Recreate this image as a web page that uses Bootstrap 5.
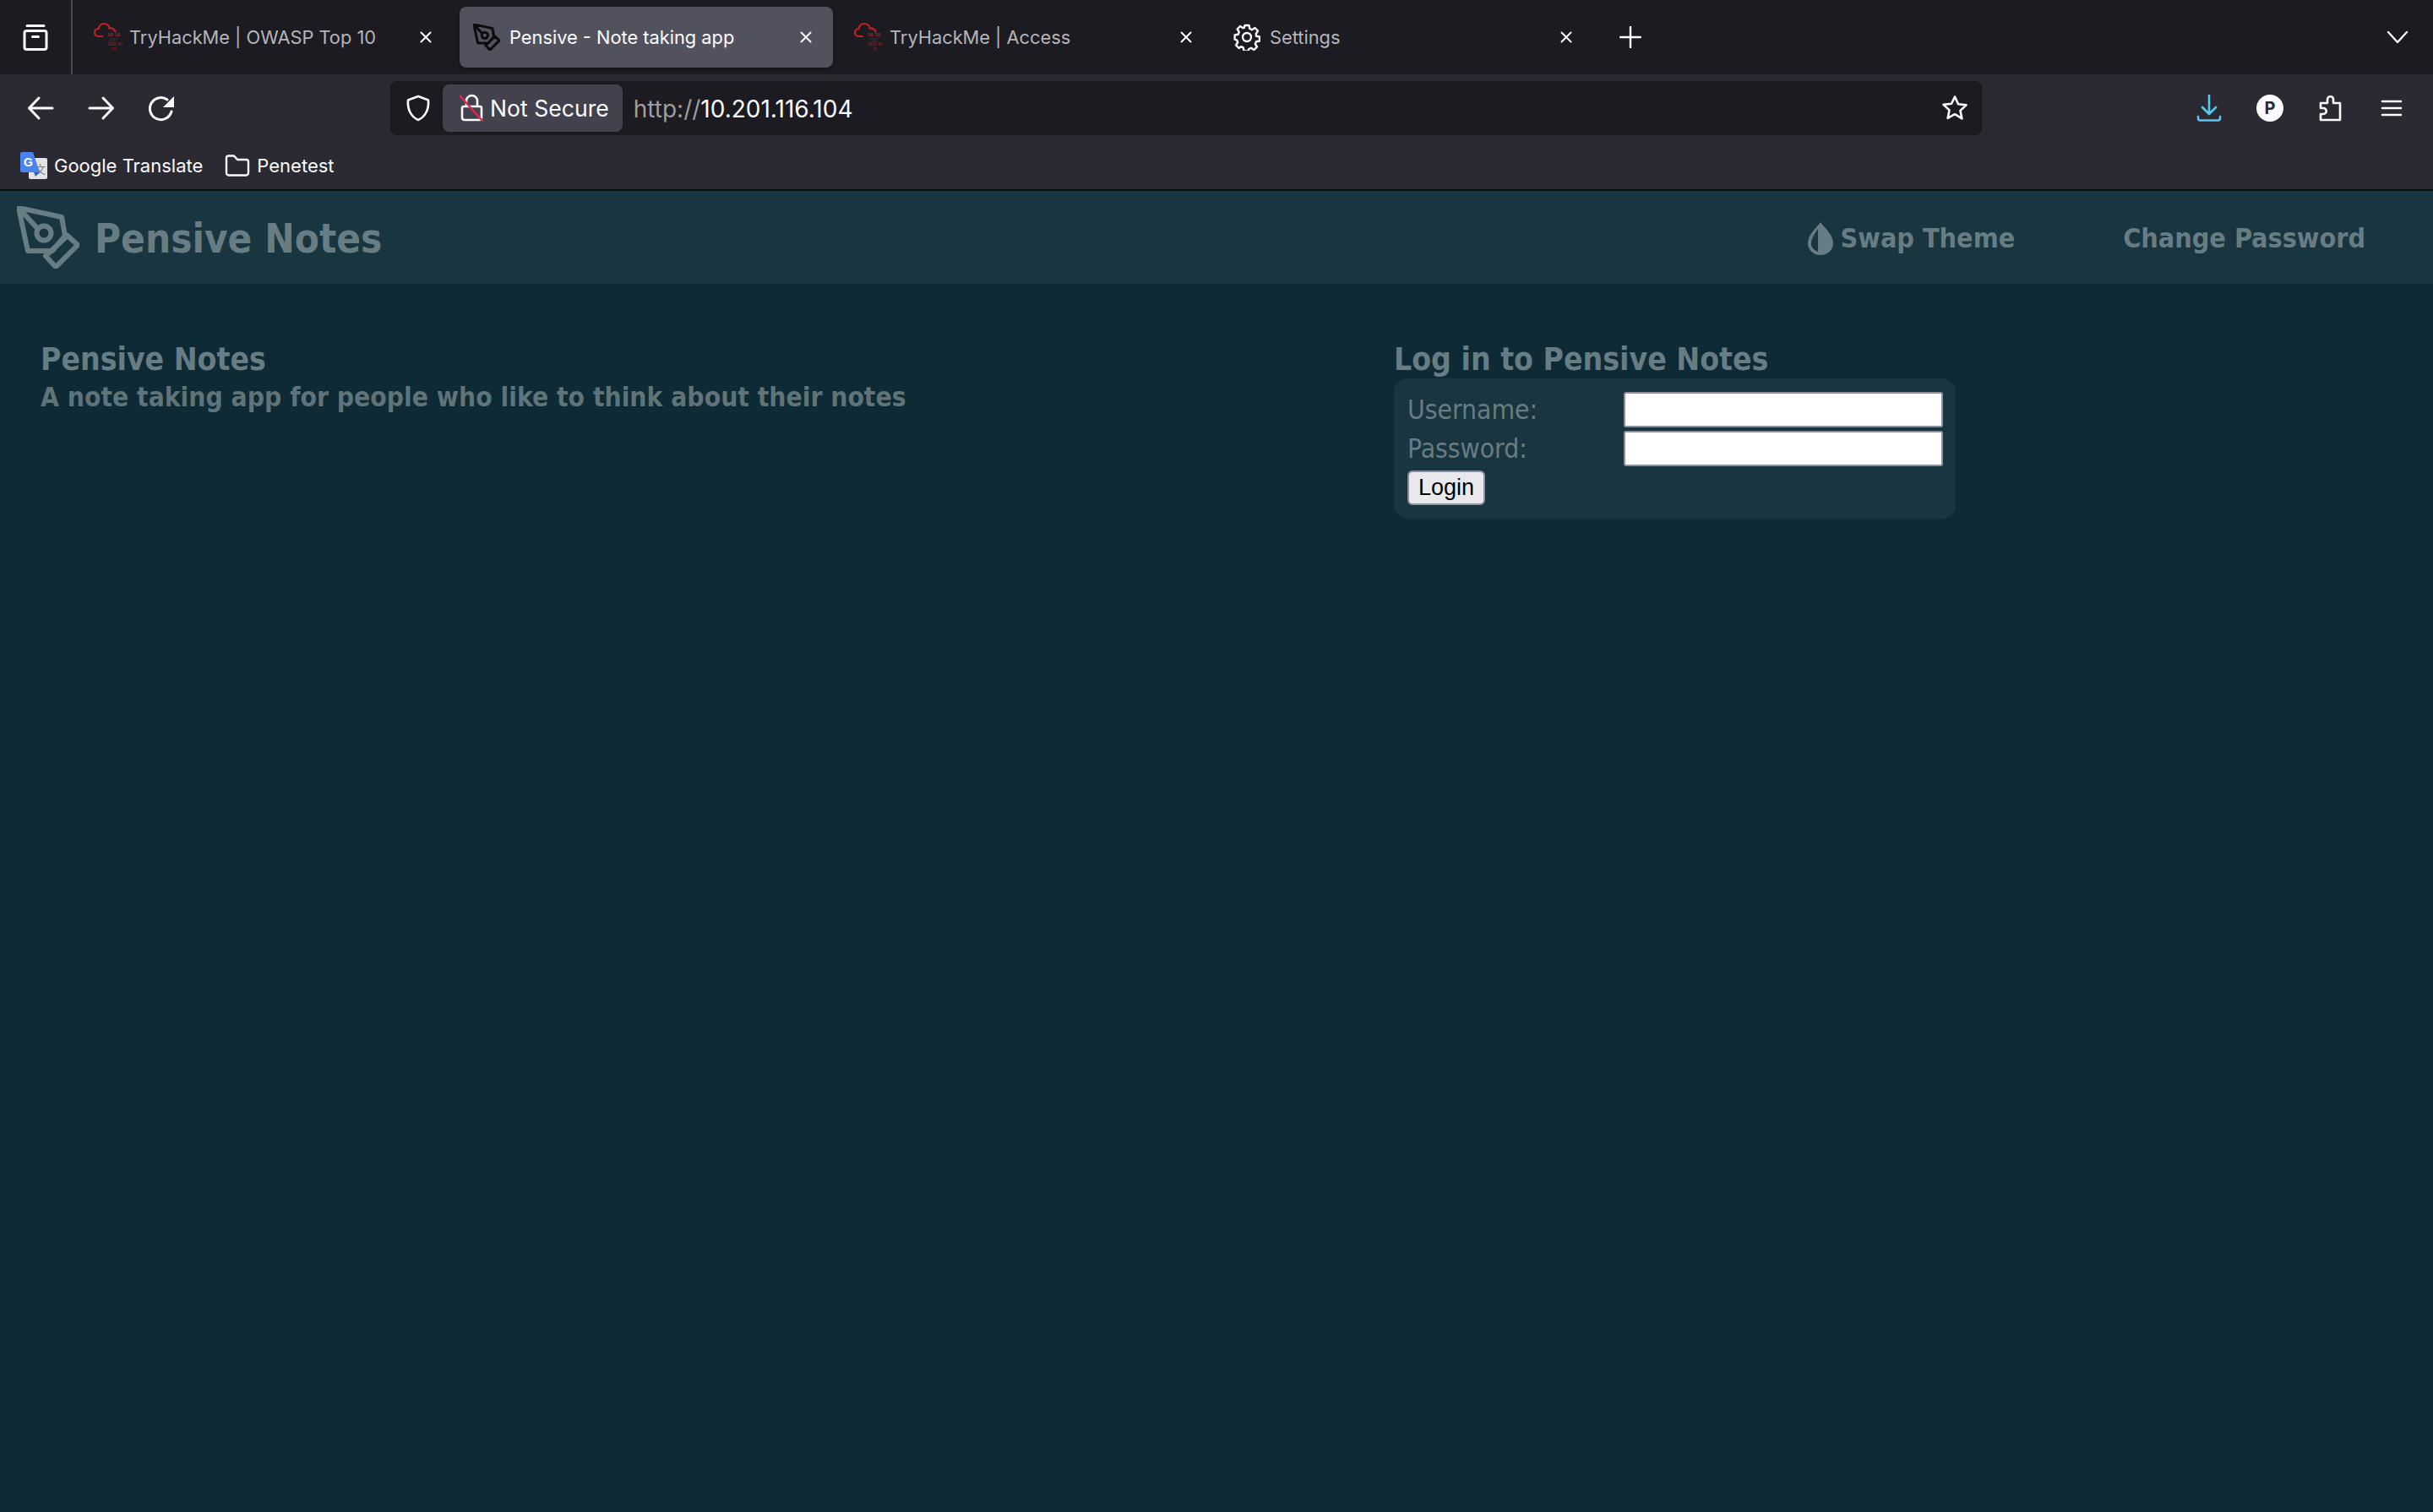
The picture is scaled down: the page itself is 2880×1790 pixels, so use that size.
<!DOCTYPE html>
<html lang="en">
  <head>
    <meta charset="UTF-8" />
    <meta name="viewport" content="width=device-width, initial-scale=1.0" />
    <title>Pensive - Note taking app</title>
    <link href="https://cdn.jsdelivr.net/npm/bootstrap@5.3.0/dist/css/bootstrap.min.css" rel="stylesheet" />
    <style>
      html, body { height: 100%; overflow: hidden; }
      body { background-color: #0e2a35; font-family: "Inter", "Liberation Sans", sans-serif; }
      svg { display: block; flex: none; }
      .ico { fill: none; stroke: #fbfbfe; stroke-width: 3; stroke-linecap: round; stroke-linejoin: round; }

      /* browser frame */
      .tab-strip { height: 88px; background: #1c1b22; }
      .strip-left { width: 86px; height: 88px; border-right: 2px solid #4a4a50; }
      .tabs { padding-left: 8px; gap: 8px; }
      .tab-item { width: 442px; height: 72px; padding: 0 16px; border-radius: 8px; font-size: 22px; color: #b5b5b9; }
      .tab-item.active { background: #52525e; color: #fbfbfe; box-shadow: 0 1px 3px rgba(0,0,0,.4); }
      .tab-title { margin-left: 7px; margin-top: 1px; white-space: nowrap; font-size: 21.8px; }
      .tab-close { margin-left: auto; margin-right: 8px; }
      .strip-end { margin-left: auto; padding-right: 28px; }
      .plus-wrap { margin-left: 31px; }

      .tool-row { height: 80px; background: #2b2a33; padding-top: 8px; }
      .nav-btns { width: 462px; padding-left: 32px; gap: 40px; }
      .url-bar { width: 1884px; height: 64px; background: #1c1b22; border-radius: 8px; padding: 4px 16px 4px 18px; }
      .not-secure { height: 56px; padding: 0 16px 0 20px; margin-left: 14px; background: #42414d; border-radius: 8px; color: #fbfbfe; gap: 8px; font-size: 26.6px; }
      .not-secure span { margin-top: 1px; }
      .url-text { margin-left: 13px; margin-top: 1px; color: #fbfbfe; font-size: 28px; }
      .url-text span { color: #9e9ea0; }
      .star { margin-left: auto; }
      .tool-end { margin-left: 253px; gap: 40px; }
      .avatar { width: 32px; height: 32px; border-radius: 50%; background: #fbfbfe; color: #2b2a33; font-size: 20px; font-weight: 700; }

      .mark-row { height: 58px; background: #2b2a33; padding-left: 24px; font-size: 22px; color: #fbfbfe; gap: 26px; border-bottom: 2px solid #0c0c0d; }
      .mark-item { gap: 8px; }
      .mark-item span { margin-top: 1px; }

      /* the page itself */
      .site-nav { height: 110px; background: #183540; padding: 0 80px 0 20px; font-family: "DejaVu Sans Condensed", "DejaVu Sans", sans-serif; font-weight: 700; color: #687c83; }
      .site-logo { font-size: 47.2px; margin-left: 18px; margin-top: 4px; }
      .site-links { margin-left: auto; gap: 128px; font-size: 32px; margin-top: 2px; }
      .site-links span.drop { gap: 8px; }
      .content { padding: 68px 0 0 48px; font-family: "DejaVu Sans Condensed", "DejaVu Sans", sans-serif; color: #687c83; }
      .intro { width: 1602px; }
      .intro h1, .login-side h1 { font-size: 37px; font-weight: 700; line-height: 44px; margin: 0; }
      .intro h2 { font-size: 31.5px; font-weight: 700; line-height: 44px; margin: 0 0 0 0; color: #5f7379; }
      .login-panel { width: 665px; height: 166px; background: #183540; border-radius: 16px; padding: 16px 16px 0; margin-top: 0; font-size: 31.5px; }
      .login-grid { display: grid; grid-template-columns: 256px 378px; row-gap: 4px; align-items: center; }
      .login-grid label { line-height: 42px; font-weight: 400; color: #687c83; }
      .login-grid input { height: 42px; width: 378px; border: 2px solid #8f8f9d; border-radius: 3px; background: #fff; padding: 0 4px; }
      .login-btn { width: 92px; height: 41px; margin-top: 5px; padding: 0; border: 2px solid #8f8f9d; border-radius: 6px; background: #e9e9ed; color: #000; font-family: "Liberation Sans", sans-serif; font-size: 27px; line-height: 1; }
    </style>
  </head>
  <body class="d-flex flex-column">
    <div class="tab-strip d-flex align-items-center">
      <div class="strip-left d-flex align-items-center justify-content-center">
        <svg class="ico" width="34" height="34" viewBox="0 0 34 34"><path d="M7 3.500h20M4 12c0-1.700 1-2.500 2.500-2.500h21c1.500 0 2.500.8 2.500 2.500v17c0 1.700-1 2.500-2.500 2.500h-21C5 31.500 4 30.700 4 29zM13.500 16.500h7" /></svg>
      </div>
      <div class="tabs d-flex align-items-center">
        <div class="tab-item d-flex align-items-center">
          <svg width="36" height="36" viewBox="0 0 36 36">
            <path d="M11 17H6.500C3.500 17 2 14.800 2 12.500 2 10 4 8 6.500 8 7.500 4 10 2 13 2c3.500 0 6 2.500 6.700 5.500C22 6.800 25.500 8 26.500 11.500" fill="none" stroke="#c0201e" stroke-width="2.200" stroke-linecap="round" />
            <text x="17" y="17" font-family="Liberation Sans" font-size="6" font-weight="700" fill="#b4201e">10 10</text>
            <text x="19" y="23" font-family="Liberation Sans" font-size="5" fill="#3c3c40">1110</text>
            <text x="17" y="28" font-family="Liberation Sans" font-size="5" font-weight="700" fill="#8e1c1c">0101 01</text>
            <text x="23" y="33" font-family="Liberation Sans" font-size="4" font-weight="700" fill="#8e1c1c">01</text>
          </svg>
          <span class="tab-title">TryHackMe | OWASP Top 10</span>
          <svg class="tab-close" width="16" height="16" viewBox="0 0 16 16"><path d="M2.500 2.500l11 11M13.500 2.500l-11 11" fill="none" stroke="#fbfbfe" stroke-width="2" stroke-linecap="round" /></svg>
        </div>
        <div class="tab-item active d-flex align-items-center">
          <svg width="32" height="32" viewBox="0 0 74 74" fill="none" stroke="#0c0c0d" stroke-width="7" stroke-linejoin="round" stroke-linecap="round"><path d="M2 2l51 11 4 22-15 18H13zM60 35l12 11-26 26-12-13zM2 2l21 23" /><circle cx="32" cy="32" r="8.500" /></svg>
          <span class="tab-title" style="margin-left:11px">Pensive - Note taking app</span>
          <svg class="tab-close" width="16" height="16" viewBox="0 0 16 16"><path d="M2.500 2.500l11 11M13.500 2.500l-11 11" fill="none" stroke="#fbfbfe" stroke-width="2" stroke-linecap="round" /></svg>
        </div>
        <div class="tab-item d-flex align-items-center">
          <svg width="36" height="36" viewBox="0 0 36 36">
            <path d="M11 17H6.500C3.500 17 2 14.800 2 12.500 2 10 4 8 6.500 8 7.500 4 10 2 13 2c3.500 0 6 2.500 6.700 5.500C22 6.800 25.500 8 26.500 11.500" fill="none" stroke="#c0201e" stroke-width="2.200" stroke-linecap="round" />
            <text x="17" y="17" font-family="Liberation Sans" font-size="6" font-weight="700" fill="#b4201e">10 10</text>
            <text x="19" y="23" font-family="Liberation Sans" font-size="5" fill="#3c3c40">1110</text>
            <text x="17" y="28" font-family="Liberation Sans" font-size="5" font-weight="700" fill="#8e1c1c">0101 01</text>
            <text x="23" y="33" font-family="Liberation Sans" font-size="4" font-weight="700" fill="#8e1c1c">01</text>
          </svg>
          <span class="tab-title">TryHackMe | Access</span>
          <svg class="tab-close" width="16" height="16" viewBox="0 0 16 16"><path d="M2.500 2.500l11 11M13.500 2.500l-11 11" fill="none" stroke="#fbfbfe" stroke-width="2" stroke-linecap="round" /></svg>
        </div>
        <div class="tab-item d-flex align-items-center">
          <svg width="32" height="32" viewBox="0 0 32 32" fill="none" stroke="#fbfbfe" stroke-width="2.400" stroke-linejoin="round"><circle cx="16" cy="16" r="5" /><path d="M13.500 2h5l.8 4 2.700 1.200 3.500-2.200 3.500 3.500-2.200 3.500L27 14.700l4 .8v5l-4 .8-1.200 2.700 2.200 3.500-3.500 3.500-3.500-2.200-2.700 1.200-.8 2.400h-5l-.8-4-2.700-1.200L6.500 29 3 25.500l2.200-3.500L4 19.300l-2.400-.8v-5l4-.8 1.200-2.700L4.600 6.500 8 3l3.500 2.200 1.200-.4z" /></svg>
          <span class="tab-title" style="margin-left:11px">Settings</span>
          <svg class="tab-close" width="16" height="16" viewBox="0 0 16 16"><path d="M2.500 2.500l11 11M13.500 2.500l-11 11" fill="none" stroke="#fbfbfe" stroke-width="2" stroke-linecap="round" /></svg>
        </div>
      </div>
      <svg class="plus-wrap" width="26" height="26" viewBox="0 0 26 26"><path d="M13 1v24M1 13h24" stroke="#fbfbfe" stroke-width="2.400" stroke-linecap="round" /></svg>
      <div class="strip-end">
        <svg class="ico" width="28" height="18" viewBox="0 0 28 18" style="stroke-width:2.400"><path d="M3 3l11 12L25 3" /></svg>
      </div>
    </div>

    <div class="tool-row d-flex align-items-start">
      <div class="nav-btns d-flex align-items-center" style="height:64px">
        <svg class="ico" width="32" height="32" viewBox="0 0 32 32"><path d="M30 16H3M14 4L2.500 16 14 28" /></svg>
        <svg class="ico" width="32" height="32" viewBox="0 0 32 32"><path d="M2 16h27M18 4l11.500 12L18 28" /></svg>
        <svg width="32" height="32" viewBox="0 0 32 32"><path d="M27 20A13 13 0 1 1 22 6" fill="none" stroke="#fbfbfe" stroke-width="3" stroke-linecap="round" /><path d="M30 2v13H17z" fill="#fbfbfe" /></svg>
      </div>
      <div class="url-bar d-flex align-items-center">
        <svg class="ico" width="30" height="32" viewBox="0 0 30 32" style="stroke-width:2.600"><path d="M15 2L27 6.500C28 18 23 26.500 15 30 7 26.500 2 18 3 6.500z" /></svg>
        <div class="not-secure d-flex align-items-center">
          <svg width="28" height="34" viewBox="0 0 28 34" fill="none" stroke="#fbfbfe" stroke-width="2.600" stroke-linecap="round"><path d="M8 14V8.500a6.500 6.500 0 0 1 13 0V15M5 15h19c1.500 0 2 1 2 2v11c0 2-1 3-3 3H6c-2 0-3-1-3-3V17c0-1 .5-2 2-2z" /><path d="M1 3l26 29" stroke="#e22850" /></svg>
          <span>Not Secure</span>
        </div>
        <div class="url-text"><span>http://</span>10.201.116.104</div>
        <svg class="star ico" width="32" height="32" viewBox="0 0 32 32" style="stroke-width:2.600"><path d="M16 2.500l4 8.800 9.500 1.100-7 6.500 1.900 9.500L16 23.200l-8.400 4.700 1.900-9.500-7-6.500 9.500-1.100z" /></svg>
      </div>
      <div class="tool-end d-flex align-items-center" style="height:64px">
        <svg width="32" height="32" viewBox="0 0 30 32" fill="none" stroke="#53c8f0" stroke-width="2.600" stroke-linecap="round" stroke-linejoin="round"><path d="M15 1v21M7 15l8 8 8-8M2 26v2c0 1.500 1 2.500 2.500 2.500h21c1.500 0 2.500-1 2.500-2.500v-2" /></svg>
        <div class="avatar d-flex align-items-center justify-content-center">P</div>
        <svg class="ico" width="32" height="32" viewBox="0 0 30 32" style="stroke-width:2.600"><path d="M3 10h8V6c0-5 7-5 7 0v4h8v20H3v-7h3c5 0 5-7 0-7H3z" /></svg>
        <svg class="ico" width="32" height="32" viewBox="-3 -5 32 32" style="stroke-width:2.600"><path d="M2 3h22M2 11h22M2 19h22" /></svg>
      </div>
    </div>

    <div class="mark-row d-flex align-items-center">
      <div class="mark-item d-flex align-items-center">
        <svg width="32" height="32" viewBox="0 0 32 32"><rect x="10" y="7" width="22" height="25" rx="2" fill="#e3e3e3" /><text x="17" y="25" font-family="Noto Sans CJK SC" font-size="13" fill="#7d8186">文</text><path d="M0 2c0-1 .6-2 2-2h13l8 24H2c-1 0-2-1-2-2z" fill="#4a84ee" /><path d="M16 24h7l-5 5z" fill="#2f5dc0" /><text x="4" y="17" font-family="Liberation Sans" font-size="14" font-weight="700" fill="#fff">G</text></svg>
        <span>Google Translate</span>
      </div>
      <div class="mark-item d-flex align-items-center">
        <svg class="ico" width="30" height="26" viewBox="0 0 30 26" style="stroke-width:2.400"><path d="M2 4c0-1.500 1-2.500 2.500-2.500H11L15 6h10.500C27 6 28 7 28 8.500v13c0 1.500-1 3-2.500 3h-21C3 24.500 2 23 2 21.500z" /></svg>
        <span>Penetest</span>
      </div>
    </div>

    <nav class="site-nav d-flex align-items-center">
      <svg width="74" height="74" viewBox="0 0 74 74" fill="none" stroke="#687c83" stroke-width="6" stroke-linejoin="round" stroke-linecap="round"><path d="M2 2l51 11 4 22-15 18H13zM60 35l12 11-26 26-12-13zM2 2l21 23" /><circle cx="32" cy="32" r="8.500" /></svg>
      <span class="site-logo">Pensive Notes</span>
      <div class="site-links d-flex align-items-center">
        <span class="drop d-flex align-items-center">
          <svg width="32" height="40" viewBox="0 0 32 40"><path d="M16 1c5 7 15 15 15 25a15 14 0 0 1-30 0C1 16 11 8 16 1z" fill="#687c83" /><path d="M13 9C9 15 5 20 5 26c0 5 3 8 8 10z" fill="#183540" /></svg>
          Swap Theme
        </span>
        <span>Change Password</span>
      </div>
    </nav>

    <main class="content d-flex flex-grow-1">
      <div class="intro">
        <h1>Pensive Notes</h1>
        <h2>A note taking app for people who like to think about their notes</h2>
      </div>
      <div class="login-side">
        <h1>Log in to Pensive Notes</h1>
        <form class="login-panel">
          <div class="login-grid">
            <label for="username">Username:</label>
            <input id="username" type="text" />
            <label for="password">Password:</label>
            <input id="password" type="password" />
          </div>
          <button type="button" class="login-btn d-block">Login</button>
        </form>
      </div>
    </main>
    <script src="https://cdn.jsdelivr.net/npm/bootstrap@5.3.0/dist/js/bootstrap.bundle.min.js"></script>
  </body>
</html>
